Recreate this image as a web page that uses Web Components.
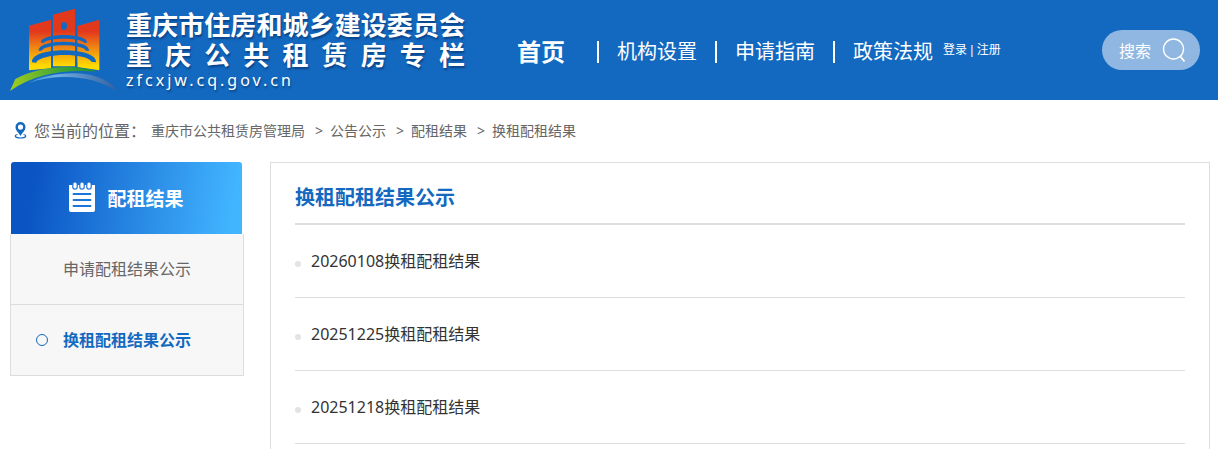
<!DOCTYPE html>
<html lang="zh-CN">
<head>
<meta charset="utf-8">
<meta name="viewport" content="width=device-width, initial-scale=1">
<title>换租配租结果公示</title>
<style>
    body {
        --blue: #1369c0;
        --line: #dddddd;
        display: flex;
        flex-direction: column;
        height: 100vh;
        margin: 0;
        overflow: hidden;
        background: #fff;
        color: #666;
        font-family: "Noto Sans", "Noto Sans CJK SC", sans-serif;
    }

    main {
        display: grid;
        grid-template-columns: 234px 1fr;
        gap: 26px;
        flex: 1;
        padding: 0 8px 0 10px;
    }
</style>
</head>
<body>
<site-header>
    <site-logo slot="logo"></site-logo>
    <nav-link href="#" current>首页</nav-link>
    <nav-link href="#">机构设置</nav-link>
    <nav-link href="#">申请指南</nav-link>
    <nav-link href="#">政策法规</nav-link>
    <account-links slot="tools"></account-links>
    <search-button slot="search">搜索</search-button>
</site-header>
<bread-crumb items='["重庆市公共租赁房管理局", "公告公示", "配租结果", "换租配租结果"]'>您当前的位置：</bread-crumb>
<main>
    <side-menu heading="配租结果">
        <side-item>申请配租结果公示</side-item>
        <side-item current>换租配租结果公示</side-item>
    </side-menu>
    <news-panel heading="换租配租结果公示">
        <news-item>20260108换租配租结果</news-item>
        <news-item>20251225换租配租结果</news-item>
        <news-item>20251218换租配租结果</news-item>
    </news-panel>
</main>

<script>
class SiteHeader extends HTMLElement {
    constructor() {
        super();
        this.attachShadow({mode: 'open'}).innerHTML = `
        <style>
            :host {
                display: block;
                flex: none;
                background: var(--blue);
                color: #fff;
            }

            header {
                display: flex;
                align-items: center;
                height: 100px;
                padding: 0 18px 0 8px;
            }

            nav {
                display: flex;
                align-items: center;
                margin-left: 52px;
                padding-top: 3px;
            }

            .search {
                margin-left: auto;
            }
        </style>
        <header>
            <slot name="logo"></slot>
            <nav><slot></slot></nav>
            <slot name="tools"></slot>
            <div class="search"><slot name="search"></slot></div>
        </header>`;
    }
}

class SiteLogo extends HTMLElement {
    constructor() {
        super();
        this.attachShadow({mode: 'open'}).innerHTML = `
        <style>
            :host {
                display: block;
            }

            a {
                display: flex;
                align-items: center;
                gap: 6px;
                color: #fff;
                text-decoration: none;
                text-shadow: 1px 2px 2px rgba(0, 30, 80, .5);
            }

            .name {
                width: 339px;
                font-size: 26px;
                font-weight: 700;
                line-height: 30px;
            }

            .name div {
                text-align: justify;
                text-align-last: justify;
                white-space: nowrap;
            }

            .name .url {
                font-size: 16px;
                font-weight: 400;
                line-height: 20px;
                letter-spacing: 3px;
                text-align-last: left;
            }
        </style>
        <a href="#">
            <svg width="112" height="90" viewBox="0 0 336 270" aria-hidden="true">
                <defs>
                    <linearGradient id="fire" gradientUnits="userSpaceOnUse" x1="0" y1="80" x2="0" y2="184">
                        <stop offset="0" stop-color="#e2391d"/>
                        <stop offset=".45" stop-color="#ef8414"/>
                        <stop offset="1" stop-color="#ffdc00"/>
                    </linearGradient>
                    <linearGradient id="grass">
                        <stop offset="0" stop-color="#a3cd1f"/>
                        <stop offset=".55" stop-color="#41a637"/>
                        <stop offset="1" stop-color="#1d8c3c"/>
                    </linearGradient>
                    <linearGradient id="river">
                        <stop offset="0" stop-color="#3f8fd8"/>
                        <stop offset=".3" stop-color="#6fb0e4"/>
                        <stop offset="1" stop-color="#355f9f"/>
                    </linearGradient>
                </defs>
                <path fill="url(#fire)" d="M63 62 129 44V190L63 196ZM135 29 201 11V184H135ZM208 63 274 44V196L208 186Z"/>
                <!-- floors run past the middle tower, tapering at both ends -->
                <path fill="url(#fire)" d="M97 110 108 98H228L240 112 247 138 262 160 255 172H80L72 160 88 138Z"/>
                <path fill="#1369c0" d="M129 44H135V190H129ZM201 44H208V190H201Z"/>
                <ellipse cx="168" cy="63" rx="9" ry="12" fill="#1369c0"/>
                <path fill="#1369c0" d="M99 113C96 82 240 82 237 113L228 113C220 97 116 97 108 113Z"/>
                <path fill="#1369c0" d="M92 137C88 101 247 101 243 137L234 137C226 115 110 115 101 137Z"/>
                <path fill="#1369c0" d="M72 172C66 124 269 124 264 172L250 170C236 143 100 143 84 173Z"/>
                <path fill="url(#grass)" d="M6 258 22 222C90 184 200 175 268 200 180 192 80 204 6 258Z"/>
                <path fill="url(#river)" d="M62 234C130 196 285 186 328 260 260 212 150 204 62 234Z"/>
            </svg>
            <div class="name">
                <div>重庆市住房和城乡建设委员会</div>
                <div>重庆公共租赁房专栏</div>
                <div class="url">zfcxjw.cq.gov.cn</div>
            </div>
        </a>`;
    }
}

class NavLink extends HTMLElement {
    constructor() {
        super();
        const href = this.getAttribute('href');
        this.attachShadow({mode: 'open'}).innerHTML = `
        <style>
            :host {
                display: flex;
                align-items: center;
                font-size: 20px;
                line-height: 30px;
            }

            :host([current]) {
                font-size: 24px;
                font-weight: 700;
                margin-right: 14px;
            }

            :host(:not([current]))::before {
                content: "";
                width: 2px;
                height: 22px;
                margin: 0 18px;
                background: #fff;
            }

            a {
                color: #fff;
                text-decoration: none;
            }
        </style>
        <a href="${href}"><slot></slot></a>`;
    }
}

class AccountLinks extends HTMLElement {
    constructor() {
        super();
        this.attachShadow({mode: 'open'}).innerHTML = `
        <style>
            :host {
                display: block;
                margin-left: 10px;
                font-family: "Liberation Sans", "Noto Sans CJK SC", sans-serif;
                font-size: 12px;
                line-height: 20px;
                white-space: nowrap;
            }

            a {
                color: #fff;
                text-decoration: none;
            }
        </style>
        <a href="#">登录</a> | <a href="#">注册</a>`;
    }
}

class SearchButton extends HTMLElement {
    constructor() {
        super();
        this.attachShadow({mode: 'open'}).innerHTML = `
        <style>
            :host {
                display: block;
            }

            button {
                display: flex;
                align-items: center;
                justify-content: space-between;
                width: 98px;
                height: 40px;
                padding: 0 14px 0 17px;
                border: 0;
                border-radius: 20px;
                background: #90b7e1;
                color: #fff;
                font: inherit;
                font-size: 16px;
            }
        </style>
        <button type="button">
            <slot></slot>
            <svg width="24" height="26" viewBox="0 0 24 26" fill="none" stroke="#fff" stroke-width="1.4" aria-hidden="true">
                <circle cx="11.5" cy="12" r="10"/>
                <path d="M18 19 22.500 24.500" stroke-width="1.8"/>
            </svg>
        </button>`;
    }
}

class BreadCrumb extends HTMLElement {
    constructor() {
        super();
        const items = JSON.parse(this.getAttribute('items'));
        const links = items.map((item) => `<li><a href="#">${item}</a></li>`).join('');

        this.attachShadow({mode: 'open'}).innerHTML = `
        <style>
            :host {
                display: block;
                flex: none;
            }

            nav {
                display: flex;
                align-items: center;
                height: 60px;
                padding: 0 14px 2px;
                font-size: 16px;
            }

            svg {
                margin-right: 7px;
            }

            ol {
                display: flex;
                margin: 0 0 0 5px;
                padding: 0;
                list-style: none;
                font-size: 14px;
            }

            li + li::before {
                content: ">";
                margin: 0 7px 0 10px;
            }

            a {
                color: inherit;
                text-decoration: none;
            }
        </style>
        <nav>
            <svg width="13" height="17" viewBox="0 0 13 17" aria-hidden="true">
                <path fill="#1369c0" fill-rule="evenodd" d="M6.500 0A5 5 0 0 0 1.500 5C1.500 8.500 4.500 10.500 6.500 14 8.500 10.500 11.500 8.500 11.500 5A5 5 0 0 0 6.500 0ZM6.500 2.500A2.600 2.600 0 1 1 6.500 7.700 2.600 2.600 0 0 1 6.500 2.500Z"/>
                <path fill="none" stroke="#1369c0" stroke-width="1.2" d="M3.500 12.500C-.5 13.500 1 16 6.500 16S13.500 13.500 9.500 12.500"/>
            </svg>
            <slot></slot>
            <ol>${links}</ol>
        </nav>`;
    }
}

class SideMenu extends HTMLElement {
    constructor() {
        super();
        const heading = this.getAttribute('heading');
        this.attachShadow({mode: 'open'}).innerHTML = `
        <style>
            :host {
                display: block;
                align-self: start;
            }

            h2 {
                display: flex;
                align-items: center;
                justify-content: center;
                gap: 12px;
                height: 70px;
                margin: 0 2px 0 1px;
                padding-top: 2px;
                border-radius: 3px 3px 0 0;
                background: linear-gradient(98deg, #0a54c4 10%, #42b5ff 95%);
                color: #fff;
                font-size: 19px;
                line-height: 28px;
            }

            svg {
                margin-bottom: 4px;
            }

            .items {
                border: 1px solid var(--line);
                border-top: 0;
                background: #f7f7f7;
            }
        </style>
        <h2>
            <svg width="26" height="30" viewBox="0 0 26 30" aria-hidden="true">
                <path fill="#fff" d="M0 3H26V28Q26 30 24 30H2Q0 30 0 28Z"/>
                <path fill="none" stroke="#1f74d9" stroke-width="5.600" stroke-linecap="round" d="M6 1V5M13 1V5M20 1V5"/>
                <path fill="none" stroke="#fff" stroke-width="3.200" stroke-linecap="round" d="M6 2V5M13 2V5M20 2V5"/>
                <path fill="none" stroke="#1f74d9" stroke-width="1.800" stroke-linecap="round" d="M4.500 12H21.500M4.500 18H21.500M4.500 24H21.500"/>
            </svg>
            ${heading}
        </h2>
        <div class="items"><slot></slot></div>`;
    }
}

class SideItem extends HTMLElement {
    constructor() {
        super();
        this.attachShadow({mode: 'open'}).innerHTML = `
        <style>
            :host {
                display: block;
            }

            :host(:not(:last-child)) {
                border-bottom: 1px solid var(--line);
            }

            a {
                display: flex;
                align-items: center;
                height: 68px;
                padding: 0 0 2px 25px;
                color: #666;
                font-size: 16px;
                text-decoration: none;
            }

            a::before {
                content: "";
                box-sizing: border-box;
                width: 12px;
                height: 12px;
                margin: 2px 15px 0 0;
                border: 1px solid transparent;
                border-radius: 50%;
            }

            :host([current]) a {
                color: var(--blue);
                font-weight: 700;
            }

            :host([current]) a::before {
                border-color: var(--blue);
            }
        </style>
        <a href="#"><slot></slot></a>`;
    }
}

class NewsPanel extends HTMLElement {
    constructor() {
        super();
        const heading = this.getAttribute('heading');
        this.attachShadow({mode: 'open'}).innerHTML = `
        <style>
            :host {
                display: block;
                padding: 0 24px;
                border: 1px solid var(--line);
                border-bottom: 0;
            }

            h1 {
                margin: 0;
                padding: 17px 0 7px;
                border-bottom: 2px solid var(--line);
                color: var(--blue);
                font-size: 20px;
                line-height: 36px;
            }
        </style>
        <h1>${heading}</h1>
        <slot></slot>`;
    }
}

class NewsItem extends HTMLElement {
    constructor() {
        super();
        this.attachShadow({mode: 'open'}).innerHTML = `
        <style>
            :host {
                display: block;
                border-bottom: 1px solid var(--line);
            }

            a {
                display: flex;
                align-items: center;
                gap: 10px;
                height: 70px;
                padding-bottom: 2px;
                color: #333;
                font-size: 16px;
                text-decoration: none;
            }

            a::before {
                content: "";
                width: 6px;
                height: 6px;
                margin-top: 7px;
                border-radius: 50%;
                background: #e3e3e3;
            }
        </style>
        <a href="#"><slot></slot></a>`;
    }
}

customElements.define('site-header', SiteHeader);
customElements.define('site-logo', SiteLogo);
customElements.define('nav-link', NavLink);
customElements.define('account-links', AccountLinks);
customElements.define('search-button', SearchButton);
customElements.define('bread-crumb', BreadCrumb);
customElements.define('side-menu', SideMenu);
customElements.define('side-item', SideItem);
customElements.define('news-panel', NewsPanel);
customElements.define('news-item', NewsItem);
</script>
</body>
</html>
